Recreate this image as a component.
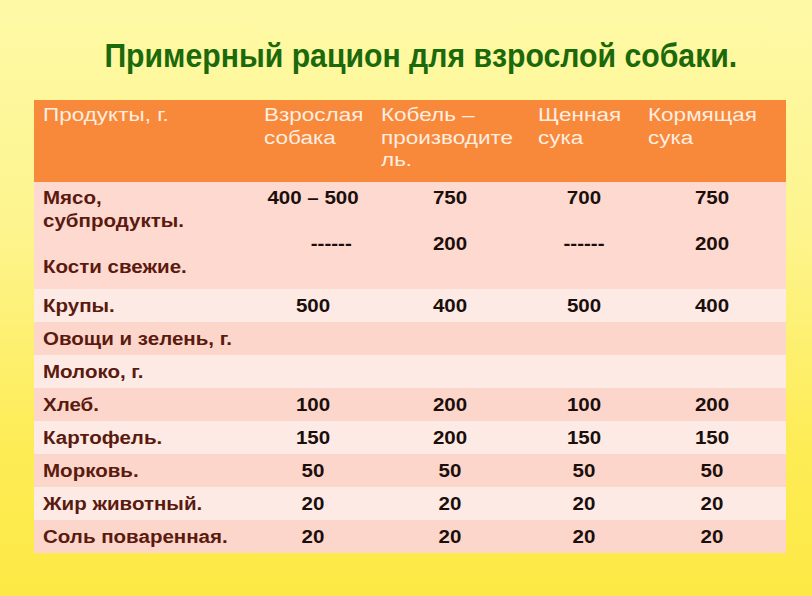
import React from "react";

const rows = [
  { label: "Крупы.", v: ["500", "400", "500", "400"], dark: false },
  { label: "Овощи и зелень, г.", v: ["", "", "", ""], dark: true },
  { label: "Молоко, г.", v: ["", "", "", ""], dark: false },
  { label: "Хлеб.", v: ["100", "200", "100", "200"], dark: true },
  { label: "Картофель.", v: ["150", "200", "150", "150"], dark: false },
  { label: "Морковь.", v: ["50", "50", "50", "50"], dark: true },
  { label: "Жир животный.", v: ["20", "20", "20", "20"], dark: false },
  { label: "Соль поваренная.", v: ["20", "20", "20", "20"], dark: true },
];

const cols = "grid grid-cols-[221px_117px_157px_110px_147px]";

function H({ children }) {
  return (
    <div className="px-[9px] pt-[4px]">
      <span className="inline-block origin-left scale-x-[1.25] whitespace-nowrap">{children}</span>
    </div>
  );
}

function L({ children, className = "" }) {
  return (
    <div className={`px-[9px] text-[#5a1a0f] ${className}`}>
      <span className="inline-block origin-left scale-x-[1.14] whitespace-nowrap">{children}</span>
    </div>
  );
}

function N({ children, className = "" }) {
  return (
    <div className={`text-center text-[#1a0f0c] ${className}`}>
      <span className="inline-block origin-center scale-x-[1.14] whitespace-nowrap">{children}</span>
    </div>
  );
}

export default function App() {
  return (
    <div className="w-[812px] h-[596px] overflow-hidden bg-[linear-gradient(to_bottom,#fef9a6_0%,#fdf48c_40%,#fdec55_75%,#fde945_100%)] font-['Liberation_Sans',Arial,sans-serif]">
      <div className="h-[100px] pt-[36px] text-center pl-[29px]">
        <h1 className="inline-block scale-x-[0.915] whitespace-nowrap font-bold text-[33px] leading-[40px] text-[#1b690b]">
          Примерный рацион для взрослой собаки.
        </h1>
      </div>
      <div className="ml-[34px] w-[752px] text-[18px]">
        <div className={`${cols} h-[82px] bg-[#f8883a] text-[#fdeee0] leading-[22.5px]`}>
          <H>Продукты, г.</H>
          <H>Взрослая<br />собака</H>
          <H>Кобель –<br />производите<br />ль.</H>
          <H>Щенная<br />сука</H>
          <H>Кормящая<br />сука</H>
        </div>
        <div className={`${cols} h-[107px] bg-[#fdd9cf] font-bold leading-[23px]`}>
          <L className="pt-[5px]">
            Мясо,<br />субпродукты.<br />&nbsp;<br />Кости свежие.
          </L>
          <N className="pt-[5px]">400 – 500<br />&nbsp;<br /><span className="ml-[32px]">------</span></N>
          <N className="pt-[5px]">750<br />&nbsp;<br />200</N>
          <N className="pt-[5px]">700<br />&nbsp;<br />------</N>
          <N className="pt-[5px]">750<br />&nbsp;<br />200</N>
        </div>
        {rows.map((r) => (
          <div
            key={r.label}
            className={`${cols} h-[33px] items-center font-bold leading-[22px] ${r.dark ? "bg-[#fcd6cb]" : "bg-[#fdeae4]"}`}
          >
            <L>{r.label}</L>
            {r.v.map((v, i) => (
              <N key={i}>{v}</N>
            ))}
          </div>
        ))}
      </div>
    </div>
  );
}
